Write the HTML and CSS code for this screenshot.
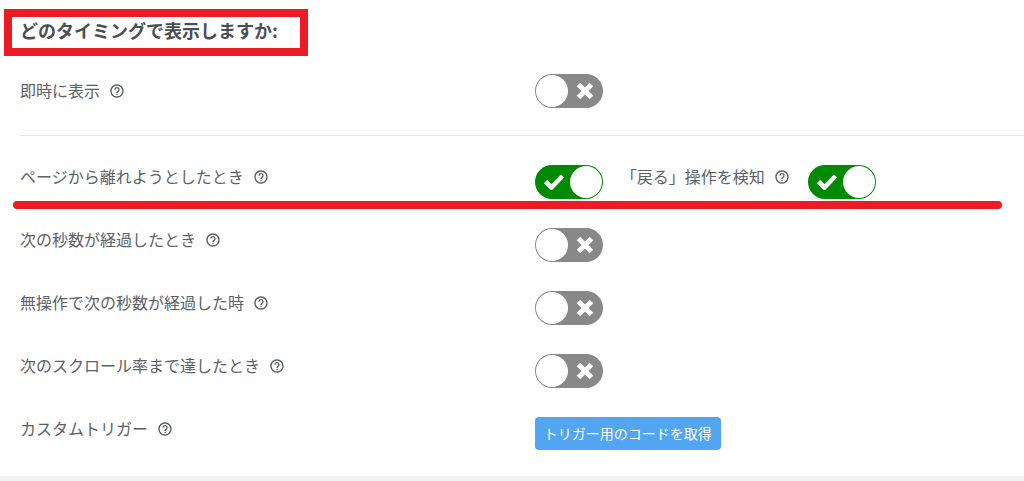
FILE: index.html
```
<!DOCTYPE html>
<html lang="ja">
<head>
<meta charset="utf-8">
<meta name="viewport" content="width=device-width, initial-scale=1">
<title>表示タイミング</title>
<link rel="stylesheet" href="styles.css">
</head>

<body>
<svg class="icons" aria-hidden="true">
	<symbol id="help" viewBox="0 0 24 24"><path fill="currentColor" d="M11 18h2v-2h-2v2zm1-16C6.480 2 2 6.480 2 12s4.480 10 10 10 10-4.480 10-10S17.520 2 12 2zm0 18c-4.410 0-8-3.590-8-8s3.590-8 8-8 8 3.590 8 8-3.590 8-8 8zm0-14c-2.210 0-4 1.790-4 4h2c0-1.100.9-2 2-2s2 .9 2 2c0 2-3 1.750-3 5h2c0-2.250 3-2.500 3-5 0-2.210-1.790-4-4-4z"/></symbol>
	<symbol id="check" viewBox="0 0 22 18"><path fill="none" stroke="#fff" stroke-width="4.600" stroke-linejoin="round" d="M2.500 8.500l6 6L19.500 3"/></symbol>
	<symbol id="cross" viewBox="0 0 18 18"><path fill="none" stroke="#fff" stroke-width="5" d="M2.500 2.500l13 13M15.500 2.500l-13 13"/></symbol>
</svg>

<form class="panel">
	<h2 class="heading">どのタイミングで表示しますか:</h2>

	<div class="row first">
		<div class="name"><label for="now">即時に表示</label><button type="button" class="help" aria-label="ヘルプ"><svg><use href="#help"/></svg></button></div>
		<div class="field">
			<span class="switch"><input type="checkbox" id="now"><svg class="on"><use href="#check"/></svg><svg class="off"><use href="#cross"/></svg></span>
		</div>
	</div>

	<hr class="divider">

	<div class="row">
		<div class="name"><label for="leave">ページから離れようとしたとき</label><button type="button" class="help" aria-label="ヘルプ"><svg><use href="#help"/></svg></button></div>
		<div class="field">
			<span class="switch"><input type="checkbox" id="leave" checked><svg class="on"><use href="#check"/></svg><svg class="off"><use href="#cross"/></svg></span>
			<div class="name"><label for="back">「戻る」操作を検知</label><button type="button" class="help" aria-label="ヘルプ"><svg><use href="#help"/></svg></button></div>
			<span class="switch"><input type="checkbox" id="back" checked><svg class="on"><use href="#check"/></svg><svg class="off"><use href="#cross"/></svg></span>
		</div>
	</div>

	<div class="underline"></div>

	<div class="row">
		<div class="name"><label for="seconds">次の秒数が経過したとき</label><button type="button" class="help" aria-label="ヘルプ"><svg><use href="#help"/></svg></button></div>
		<div class="field">
			<span class="switch"><input type="checkbox" id="seconds"><svg class="on"><use href="#check"/></svg><svg class="off"><use href="#cross"/></svg></span>
		</div>
	</div>

	<div class="row">
		<div class="name"><label for="idle">無操作で次の秒数が経過した時</label><button type="button" class="help" aria-label="ヘルプ"><svg><use href="#help"/></svg></button></div>
		<div class="field">
			<span class="switch"><input type="checkbox" id="idle"><svg class="on"><use href="#check"/></svg><svg class="off"><use href="#cross"/></svg></span>
		</div>
	</div>

	<div class="row">
		<div class="name"><label for="scroll">次のスクロール率まで達したとき</label><button type="button" class="help" aria-label="ヘルプ"><svg><use href="#help"/></svg></button></div>
		<div class="field">
			<span class="switch"><input type="checkbox" id="scroll"><svg class="on"><use href="#check"/></svg><svg class="off"><use href="#cross"/></svg></span>
		</div>
	</div>

	<div class="row">
		<div class="name"><label for="code">カスタムトリガー</label><button type="button" class="help" aria-label="ヘルプ"><svg><use href="#help"/></svg></button></div>
		<div class="field">
			<button type="button" id="code" class="btn">トリガー用のコードを取得</button>
		</div>
	</div>
</form>
</body>
</html>
```

FILE: styles.css
```
*{ margin:0; padding:0; box-sizing:border-box;}
body{ background:#f1f2f3; color:#5c6167; font:16px/24px "Noto Sans CJK JP", sans-serif;}
button{ border:0; font-family:inherit; cursor:pointer;}
.icons{ display:none;}

.panel{ background:#fff; padding:9px 0 26px;}
.heading{ width:fit-content; margin:0 4px 18px; padding:1px 22px 6px 8px; border:8px solid #ed1c24; font-size:18px; line-height:24px; color:#4a4f55;}

/* rows */
.row{ display:grid; grid-template-columns:20fr 19fr; margin:0 0 29px 20px;}
.row:last-child{ margin-bottom:0;}
.first{ align-items:center; margin-bottom:27px;}
.name{ display:flex; align-items:center; gap:9px; height:24px; white-space:nowrap;}
.name label{ padding-bottom:2px;}
.field{ display:flex; align-items:flex-start; gap:18px;}
.divider{ margin:0 0 29px 20px; border:0; border-top:1px solid #e6e7e8;}
.underline{ height:8px; margin:-27px 22px 19px 13px; border-radius:4px; background:#ed1c24;}

.help{ width:16px; height:16px; background:none; color:#54595f;}
.help svg{ display:block; width:16px; height:16px;}

/* on / off switch */
.switch{ position:relative; flex:none; width:68px; height:34px;}
.switch input{ display:flex; appearance:none; width:68px; height:34px; padding:1px; border-radius:17px; background:#888; cursor:pointer;}
.switch input:before{ content:""; width:32px; height:32px; border-radius:50%; background:#fff;}
.switch input:checked{ justify-content:flex-end; background:#008a00;}
.switch svg{ position:absolute; top:8px; height:18px; pointer-events:none;}
.switch .on{ left:8px; width:22px; display:none;}
.switch .off{ right:9px; width:18px;}
.switch input:checked ~ .on{ display:block;}
.switch input:checked ~ .off{ display:none;}

.btn{ padding:4px 9px 5px; border-radius:4px; background:#51a5f1; color:#fff; font-size:14px; line-height:24px;}
```
